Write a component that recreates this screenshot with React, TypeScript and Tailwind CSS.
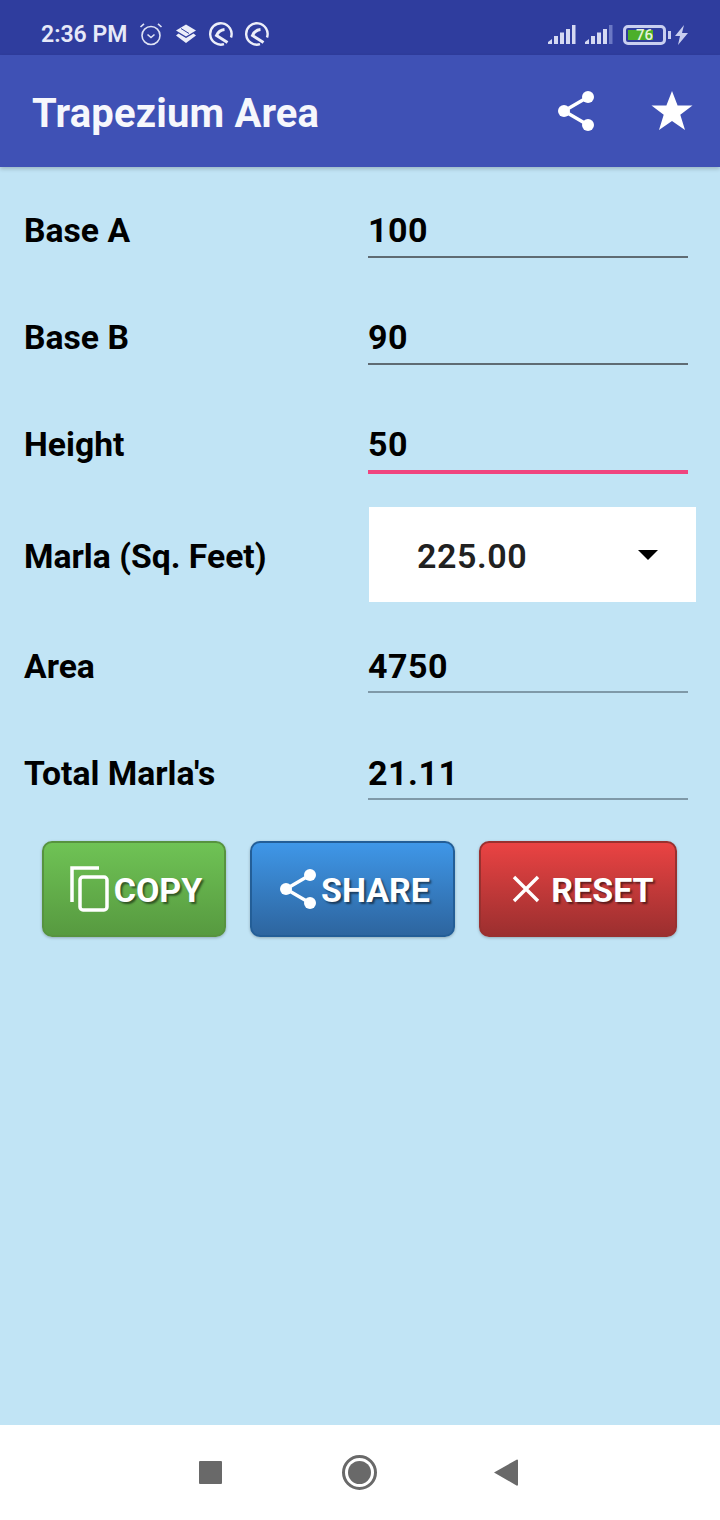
import type { ReactNode } from "react";

const font = { fontFamily: "Roboto, sans-serif" };

function ShareIcon({ className }: { className: string }) {
  return (
    <svg className={className} viewBox="0 0 38 40" fill="white">
      <circle cx="31" cy="6" r="6" />
      <circle cx="7" cy="20" r="6" />
      <circle cx="31" cy="34" r="6" />
      <path d="M31 6 7 20l24 14" fill="none" stroke="white" strokeWidth="3.4" />
    </svg>
  );
}

function StatusIcons() {
  return (
    <div className="flex items-center ml-[12px] mb-[2px]">
      {/* alarm */}
      <svg className="w-[24px] h-[24px]" viewBox="0 0 24 24" fill="none" stroke="#dfe3f5" strokeWidth="1.6">
        <circle cx="12" cy="13.500" r="9" />
        <path d="M8.500 12.500 12 15.500l3.500-3M1.500 5 5 1.800M22.500 5 19 1.800" />
      </svg>
      {/* layers */}
      <svg className="w-[22px] h-[22px] ml-[12px]" viewBox="0 0 22 22" fill="#eceef9">
        <path d="M11 1.500 21 7.500 11 13.500 1 7.500z" />
        <path d="M6 5.500l8 5" stroke="#2f3d9e" strokeWidth="1" />
        <path d="M3.500 10.500 11 15l7.500-4.500L21 12.500 11 20 1 12.500z" />
      </svg>
      {[0, 1].map((i) => (
        <svg key={i} className="w-[24px] h-[24px] ml-[12px]" viewBox="0 0 24 24" fill="none" stroke="#eceef9" strokeWidth="2.400">
          <path d="M15 22.200A10.700 10.700 0 1 1 22 15.500" />
          <path d="M15.500 7.500Q10 8 7.500 13.500L18.500 20.500" strokeWidth="3" />
        </svg>
      ))}
    </div>
  );
}

function Signal({ dim }: { dim?: boolean }) {
  return (
    <svg className="w-[28px] h-[20px]" viewBox="0 0 28 20" fill="#d5d9f2">
      <path d="M0 19v-2l4-3v5z" />
      <rect x="6" y="11" width="4" height="8" />
      <rect x="12" y="7.500" width="4" height="11.500" />
      <rect x="18" y="4" width="4" height="15" />
      <rect x="24" y="0" width="3.500" height="19" fill={dim ? "#6b78c4" : "#d5d9f2"} />
    </svg>
  );
}

function StatusBar() {
  return (
    <div className="h-[55px] bg-[#2f3d9e] flex items-center pl-[41px] pt-[15px] pr-[32px]">
      <span className="text-[23px] font-semibold text-[#e6e9f8]">2:36 PM</span>
      <StatusIcons />
      <div className="ml-auto flex items-center">
        <Signal />
        <div className="ml-[9px]">
          <Signal dim />
        </div>
        <div className="ml-[10px] relative w-[43px] h-[20px] rounded-[5px] border-[3px] border-[#c9cff0] p-[2px]">
          <div className="h-full w-[25px] bg-[#4caf2a]" />
          <span className="absolute inset-0 flex items-center justify-center text-[15px] font-medium text-[#e6f3dc] leading-none">76</span>
        </div>
        <div className="w-[3px] h-[8px] bg-[#c9cff0] ml-[2px]" />
        <svg className="w-[13px] h-[20px] ml-[4px]" viewBox="0 0 13 20" fill="#c9cff0">
          <path d="M9 0 0 11h5l-2 9 10-12H7z" />
        </svg>
      </div>
    </div>
  );
}

function AppBar() {
  return (
    <div className="h-[112px] bg-[#3f51b5] flex items-center pl-[32px] pt-[5px] shadow-[0_2px_4px_rgba(0,0,0,0.2)] relative">
      <span className="text-[40px] font-bold text-[#f6f7fc] tracking-[0.15px]">Trapezium Area</span>
      <ShareIcon className="w-[38px] h-[40px] ml-auto mb-[5px]" />
      <svg className="w-[42px] h-[40px] ml-[56px] mr-[27px] mb-[5px]" viewBox="0 0 42 40" fill="white">
        <path d="M21 0l5.600 14.500H41.500L29.300 23.800 34 39 21 30 8 39l4.700-15.200L.5 14.500h14.900z" />
      </svg>
    </div>
  );
}

function Row({ label, className, labelClass, children }: { label: string; className: string; labelClass: string; children: ReactNode }) {
  return (
    <div className={`flex items-end pl-[24px] ${className}`}>
      <span className={`w-[344px] text-[33.700px] font-bold text-black leading-[40px] ${labelClass}`}>{label}</span>
      {children}
    </div>
  );
}

function Field({ value, className = "border-b-2 border-[#5f6b73] pb-[6px]" }: { value: string; className?: string }) {
  return (
    <div className={`w-[320px] h-full flex items-end ${className}`}>
      <span className="text-[34px] font-bold text-black tracking-[0.5px] leading-[40px]">{value}</span>
    </div>
  );
}

function Button({ className, children }: { className: string; children: ReactNode }) {
  return (
    <div className={`h-[96px] rounded-[10px] border-2 flex items-center justify-center shadow-[0_1px_3px_rgba(0,0,0,0.25)] text-[34px] font-bold text-white [text-shadow:2px_2px_2px_rgba(0,0,0,0.5)] ${className}`}>
      {children}
    </div>
  );
}

function Buttons() {
  return (
    <div className="flex mt-[41px] ml-[42px] gap-[24px]">
      <Button className="w-[184px] pl-[4px] border-[#57933f] bg-gradient-to-b from-[#6fc355] to-[#579a40]">
        <svg className="w-[40px] h-[46px] mr-[4px]" viewBox="0 0 40 46" fill="none" stroke="white" strokeWidth="3.500">
          <path d="M29 2H2v34" />
          <rect x="10" y="11" width="27" height="33" rx="3" />
        </svg>
        <span className="pt-[3px]">COPY</span>
      </Button>
      <Button className="w-[205px] pl-[4px] border-[#235e97] bg-gradient-to-b from-[#3f97e8] to-[#2d659f]">
        <ShareIcon className="w-[38px] h-[40px] mr-[4px]" />
        <span className="pt-[3px]">SHARE</span>
      </Button>
      <Button className="w-[198px] pl-[10px] border-[#99302f] bg-gradient-to-b from-[#ea4343] to-[#9c2f2f]">
        <svg className="w-[28px] h-[28px] mr-[11px]" viewBox="0 0 28 28" stroke="white" strokeWidth="3.400">
          <path d="M2 2l24 24M26 2 2 26" />
        </svg>
        <span className="pt-[3px]">RESET</span>
      </Button>
    </div>
  );
}

function NavBar() {
  return (
    <div className="h-[95px] bg-white flex items-center pl-[199px]">
      <div className="w-[23px] h-[23px] bg-[#696969] rounded-[1px]" />
      <div className="ml-[120px] w-[35px] h-[35px] rounded-full border-[3px] border-[#696969] p-[3px]">
        <div className="w-full h-full rounded-full bg-[#696969]" />
      </div>
      <svg className="w-[24px] h-[27px] ml-[117px]" viewBox="0 0 24 27" fill="#696969">
        <path d="M23 0.500a1 1 0 0 1 1 1v24a1 1 0 0 1-1.500 1L0 13.500z" />
      </svg>
    </div>
  );
}

export default function App() {
  return (
    <div className="w-[720px] h-[1520px] flex flex-col overflow-hidden bg-[#c1e4f5]" style={font}>
      <StatusBar />
      <AppBar />
      <div className="flex-1">
        <Row label="Base A" labelClass="mb-[7px]" className="h-[80px] mt-[11px]">
          <Field value="100" />
        </Row>
        <Row label="Base B" labelClass="mb-[7px]" className="h-[80px] mt-[27px]">
          <Field value="90" />
        </Row>
        <Row label="Height" labelClass="mb-[9px]" className="h-[82px] mt-[27px] mb-[-2px]">
          <Field value="50" className="border-b-4 border-[#f0457f] pb-[6px]" />
        </Row>
        <Row label="Marla (Sq. Feet)" labelClass="mb-[25px]" className="h-[95px] mt-[35px]">
          <div className="w-[327px] h-full ml-[1px] bg-white flex items-center pl-[48px] pr-[38px]">
            <span className="text-[34px] font-semibold text-[#212121] tracking-[0.6px] pt-[3px]">225.00</span>
            <div className="ml-auto w-0 h-0 border-x-[10px] border-x-transparent border-t-[10px] border-t-black" />
          </div>
        </Row>
        <Row label="Area" labelClass="mb-[6px]" className="h-[80px] mt-[11px]">
          <Field value="4750" className="border-b-2 border-[#7f99a8] pb-[5px]" />
        </Row>
        <Row label="Total Marla's" labelClass="mb-[6px]" className="h-[80px] mt-[27px]">
          <Field value="21.11" className="border-b-2 border-[#7f99a8] pb-[5px]" />
        </Row>
        <Buttons />
      </div>
      <NavBar />
    </div>
  );
}
